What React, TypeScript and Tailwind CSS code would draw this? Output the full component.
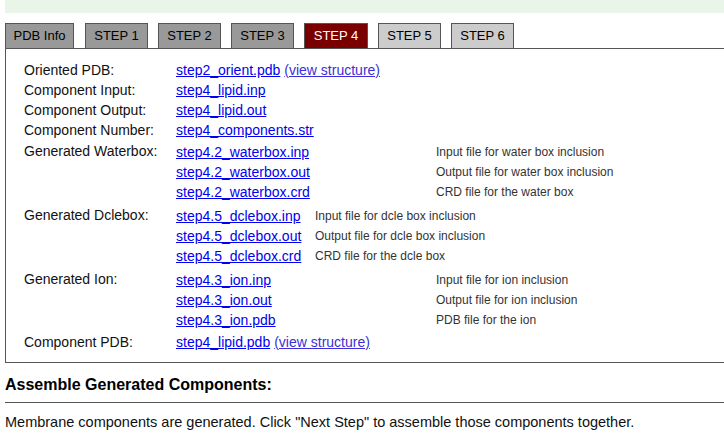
const tabs = [
  { label: "PDB Info", cls: "w-[69px] bg-[#999999] text-black" },
  { label: "STEP 1", cls: "ml-[11px] w-[63px] bg-[#999999] text-black" },
  { label: "STEP 2", cls: "ml-[10px] w-[63px] bg-[#999999] text-black" },
  { label: "STEP 3", cls: "ml-[10px] w-[63px] bg-[#999999] text-black" },
  { label: "STEP 4", cls: "ml-[10px] w-[64px] bg-[#7a0000] text-white" },
  { label: "STEP 5", cls: "ml-[10px] w-[63px] bg-[#cccccc] text-black" },
  { label: "STEP 6", cls: "ml-[10px] w-[63px] bg-[#cccccc] text-black" },
];

type FileRow = { name: string; desc: string };

const waterbox: FileRow[] = [
  { name: "step4.2_waterbox.inp", desc: "Input file for water box inclusion" },
  { name: "step4.2_waterbox.out", desc: "Output file for water box inclusion" },
  { name: "step4.2_waterbox.crd", desc: "CRD file for the water box" },
];

const dclebox: FileRow[] = [
  { name: "step4.5_dclebox.inp", desc: "Input file for dcle box inclusion" },
  { name: "step4.5_dclebox.out", desc: "Output file for dcle box inclusion" },
  { name: "step4.5_dclebox.crd", desc: "CRD file for the dcle box" },
];

const ion: FileRow[] = [
  { name: "step4.3_ion.inp", desc: "Input file for ion inclusion" },
  { name: "step4.3_ion.out", desc: "Output file for ion inclusion" },
  { name: "step4.3_ion.pdb", desc: "PDB file for the ion" },
];

function FileLink({ children }: { children: React.ReactNode }) {
  return <a href="#" className="text-[#0000ee] underline">{children}</a>;
}

function ViewLink() {
  return <a href="#" className="ml-[4px] text-[#3a2fd8] underline">(view structure)</a>;
}

function Row({ label, children }: { label: string; children: React.ReactNode }) {
  return (
    <div className="flex h-[20px] leading-[20px]">
      <div className="w-[152px] shrink-0">{label}</div>
      <div className="min-w-0 whitespace-nowrap">{children}</div>
    </div>
  );
}

function FileGroup({ label, files, linkCol }: { label: string; files: FileRow[]; linkCol: string }) {
  return (
    <div className="flex pb-[2px] pt-[1px]">
      <div className="h-[20px] w-[152px] shrink-0 leading-[20px]">{label}</div>
      <div className="grid pt-[1px]" style={{ gridTemplateColumns: linkCol }}>
        {files.map((f) => (
          <div key={f.name} className="contents">
            <div className="h-[20px] whitespace-nowrap leading-[20px]">
              <FileLink>{f.name}</FileLink>
            </div>
            <div className="h-[20px] whitespace-nowrap text-[12px] leading-[20px] text-[#333333]">{f.desc}</div>
          </div>
        ))}
      </div>
    </div>
  );
}

export default function App() {
  return (
    <div className="h-[440px] w-[724px] overflow-hidden bg-white font-['Liberation_Sans',Arial,sans-serif] text-[14px] text-[#111111]">
      <div className="ml-[5px] h-[13px] bg-[#eaf5e9]" />
      <div className="ml-[5px] mt-[10px] flex">
        {tabs.map((t) => (
          <div
            key={t.label}
            className={`${t.cls} flex h-[25px] items-center justify-center border border-b-0 border-[#555555] text-[13px]`}
          >
            {t.label}
          </div>
        ))}
      </div>
      <div className="ml-[5px] w-[730px] border border-[#555555] pb-[10px] pl-[18px] pt-[11px]">
        <Row label="Oriented PDB:">
          <FileLink>step2_orient.pdb</FileLink>
          <ViewLink />
        </Row>
        <Row label="Component Input:">
          <FileLink>step4_lipid.inp</FileLink>
        </Row>
        <Row label="Component Output:">
          <FileLink>step4_lipid.out</FileLink>
        </Row>
        <Row label="Component Number:">
          <FileLink>step4_components.str</FileLink>
        </Row>
        <FileGroup label="Generated Waterbox:" files={waterbox} linkCol="260px auto" />
        <FileGroup label="Generated Dclebox:" files={dclebox} linkCol="139px auto" />
        <FileGroup label="Generated Ion:" files={ion} linkCol="260px auto" />
        <Row label="Component PDB:">
          <FileLink>step4_lipid.pdb</FileLink>
          <ViewLink />
        </Row>
      </div>
      <h2 className="ml-[5px] mt-[12px] border-b border-[#555555] pb-[8px] text-[16px] font-bold leading-[19px] text-black">
        Assemble Generated Components:
      </h2>
      <p className="ml-[5px] mt-[8px] text-[14.5px] leading-[22px] text-[#111111]">
        Membrane components are generated. Click "Next Step" to assemble those components together.
      </p>
    </div>
  );
}
